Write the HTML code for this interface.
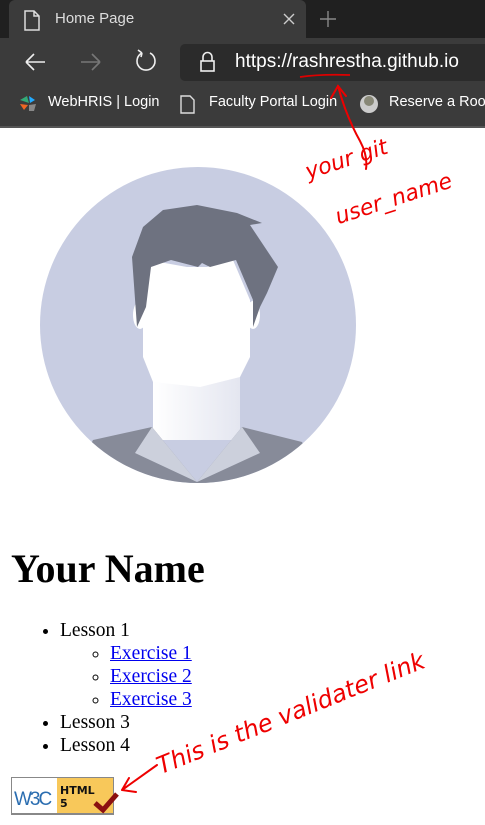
<!DOCTYPE html>
<html><head><meta charset="utf-8"><style>
*{margin:0;padding:0;box-sizing:border-box}
body{width:485px;height:825px;overflow:hidden;background:#fff;position:relative;font-family:"Liberation Serif",serif}
.ui{font-family:"Liberation Sans",sans-serif;color:#fff}
.abs{position:absolute}
ul{list-style:disc}
a{color:#0000ee}
.hw{position:absolute;color:#e00;font-family:"DejaVu Sans",sans-serif;font-style:italic;white-space:nowrap;transform-origin:0 100%}
</style></head><body>
<div class="abs" style="left:0;top:0;width:485px;height:38px;background:#202020"></div>
<div class="abs" style="left:9px;top:0;width:297px;height:38px;background:#3b3b3b;border-radius:6px 6px 0 0"></div>
<svg class="abs" style="left:0;top:0" width="485" height="130">
<rect x="0" y="38" width="485" height="90" fill="#3b3b3b"/>
<rect x="180" y="44" width="310" height="37" rx="5" fill="#2b2b2b"/>
<path d="M25 11h9l5 5v14h-14z M34 11v5h5" fill="none" stroke="#ddd" stroke-width="1.5"/>
<path d="M284 14l10 10M294 14l-10 10" stroke="#ccc" stroke-width="1.4"/>
<path d="M328 11v16M320 19h16" stroke="#888" stroke-width="1.4"/>
<path d="M26 62h19M26 62l8-8M26 62l8 8" fill="none" stroke="#eee" stroke-width="1.6"/>
<path d="M81 62h19M100 62l-8-8M100 62l-8 8" fill="none" stroke="#777" stroke-width="1.6"/>
<path d="M150 53a9 9 0 1 1-8 0" fill="none" stroke="#eee" stroke-width="1.6"/><path d="M142 53l-4-3M142 53l-1 4" stroke="#eee" stroke-width="1.6"/>
<rect x="201" y="61" width="13" height="10" fill="none" stroke="#eee" stroke-width="1.6"/><path d="M203 61v-4a4.5 4.5 0 0 1 9 0v4" fill="none" stroke="#eee" stroke-width="1.6"/>
<path d="M20 100l7-4 2 7z" fill="#3a7"/><path d="M29 96l6 4-5 3z" fill="#2af"/><path d="M20 104l8 1-4 5z" fill="#e62"/><path d="M29 105l7-1-2 7-5 0z" fill="#888"/>
<path d="M181 96h9l4 4v13h-13z" fill="none" stroke="#ddd" stroke-width="1.4"/>
<circle cx="369" cy="104" r="9" fill="#ccc"/><circle cx="369" cy="101" r="5" fill="#887"/>
<path d="M300 77q20 -3 50 -2" stroke="#d00" stroke-width="1.8" fill="none"/>
</svg>
<div class="abs ui" style="left:55px;top:10px;font-size:15px;color:#ddd">Home Page</div>
<div class="abs ui" style="left:235px;top:51px;font-size:19px;color:#fff">https://rashrestha.github.io</div>
<div class="abs ui" style="left:48px;top:94px;font-size:14.5px">WebHRIS | Login</div>
<div class="abs ui" style="left:209px;top:94px;font-size:14.5px">Faculty Portal Login</div>
<div class="abs ui" style="left:389px;top:94px;font-size:14.5px;white-space:nowrap">Reserve a Room</div>
<div class="abs" style="left:0;top:126px;width:485px;height:2px;background:#555"></div>

<svg class="abs" style="left:0;top:0" width="485" height="530">
<defs><clipPath id="c"><circle cx="198" cy="325" r="158"/></clipPath>
<linearGradient id="g" x1="0" x2="1"><stop offset="0" stop-color="#fff"/><stop offset="1" stop-color="#e4e6f0"/></linearGradient></defs>
<circle cx="198" cy="325" r="158" fill="#c8cde2"/>
<g clip-path="url(#c)">
<path d="M153 360h87v80h-87z" fill="url(#g)"/>
<path d="M143 300l5-40 39 7h20l26-7 17 40 0 57-10 20-40 10-47-5-10-25z" fill="#fff"/>
<ellipse cx="140" cy="315" rx="7" ry="14" fill="#fff"/><ellipse cx="253" cy="315" rx="7" ry="14" fill="#fff"/>
<path d="M137 327l-5-70 11-30 20-17 34-5 40 8 25 10-12 2 28 42-11 26-7 14-7 20 0-27-17-40-26 7-8-4-4 4-27-7-20 7-5 40z" fill="#6e7280"/>
<path d="M93 440l59-13 45 55 45-55 60 15 30 60h-270z" fill="#878b99"/>
<path d="M135 453l17-26 45 55zM260 453l-18-26-45 55z" fill="#ccd0dc"/>
</g>
<g fill="none" stroke="#e00" stroke-width="2" stroke-linecap="round">
<path d="M338 86q8 30 22 55q8 15 6 28"/><path d="M331 98l7-12 8 10"/>
</g>
</svg>
<div class="hw" style="left:310px;top:160px;font-size:22px;transform:rotate(-18deg)">your git</div>
<div class="hw" style="left:340px;top:205px;font-size:22px;transform:rotate(-18deg)">user_name</div>

<h1 class="abs" style="left:11px;top:545px;font-size:40px;font-weight:bold;color:#000">Your Name</h1>
<div class="abs" style="left:0;top:619px;font-size:19.5px;line-height:23px;color:#000">
<ul style="padding-left:60px">
<li>Lesson 1
<ul style="list-style:circle;padding-left:50px"><li><a href="#">Exercise 1</a></li><li><a href="#">Exercise 2</a></li><li><a href="#">Exercise 3</a></li></ul></li>
<li>Lesson 3</li><li>Lesson 4</li></ul></div>

<svg class="abs" style="left:0;top:740px" width="485" height="85">
<rect x="11" y="37" width="103" height="38" fill="#888"/>
<rect x="12" y="38" width="45" height="35" fill="#fff"/>
<rect x="57" y="38" width="56" height="35" fill="#f8c85a"/>
<text x="14" y="65" font-family="Liberation Sans" font-size="19" fill="#2a6db0" letter-spacing="-2">W3C</text>
<text x="60" y="54" font-family="DejaVu Sans" font-weight="bold" font-size="11" fill="#111">HTML</text>
<text x="60" y="67" font-family="DejaVu Sans" font-weight="bold" font-size="11" fill="#111">5</text>
<path d="M95 63l8 7 14-16" stroke="#8b1010" stroke-width="5" fill="none"/>
<g fill="none" stroke="#e00" stroke-width="2" stroke-linecap="round">
<path d="M122 50l35-25M122 50l14 2M122 50l7-12"/>
</g>
</svg>
<div class="hw" style="left:163px;top:752px;font-size:24px;transform:rotate(-22deg)">This is the validater link</div>
</body></html>
